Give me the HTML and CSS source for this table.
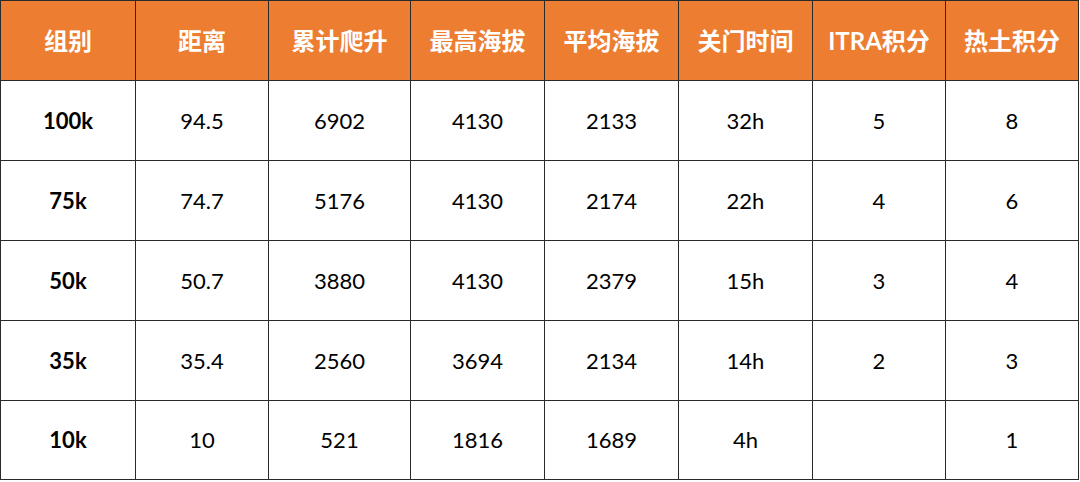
FILE: index.html
```html
<!DOCTYPE html>
<html lang="zh">
<head>
<meta charset="utf-8">
<link rel="stylesheet" href="styles.css">
</head>
<body>
<div class="table">
  <div class="cell head">组别</div>
  <div class="cell head">距离</div>
  <div class="cell head">累计爬升</div>
  <div class="cell head">最高海拔</div>
  <div class="cell head">平均海拔</div>
  <div class="cell head">关门时间</div>
  <div class="cell head">ITRA积分</div>
  <div class="cell head">热土积分</div>

  <div class="cell key">100k</div>
  <div class="cell">94.5</div>
  <div class="cell">6902</div>
  <div class="cell">4130</div>
  <div class="cell">2133</div>
  <div class="cell">32h</div>
  <div class="cell">5</div>
  <div class="cell">8</div>

  <div class="cell key">75k</div>
  <div class="cell">74.7</div>
  <div class="cell">5176</div>
  <div class="cell">4130</div>
  <div class="cell">2174</div>
  <div class="cell">22h</div>
  <div class="cell">4</div>
  <div class="cell">6</div>

  <div class="cell key">50k</div>
  <div class="cell">50.7</div>
  <div class="cell">3880</div>
  <div class="cell">4130</div>
  <div class="cell">2379</div>
  <div class="cell">15h</div>
  <div class="cell">3</div>
  <div class="cell">4</div>

  <div class="cell key">35k</div>
  <div class="cell">35.4</div>
  <div class="cell">2560</div>
  <div class="cell">3694</div>
  <div class="cell">2134</div>
  <div class="cell">14h</div>
  <div class="cell">2</div>
  <div class="cell">3</div>

  <div class="cell key">10k</div>
  <div class="cell">10</div>
  <div class="cell">521</div>
  <div class="cell">1816</div>
  <div class="cell">1689</div>
  <div class="cell">4h</div>
  <div class="cell"></div>
  <div class="cell">1</div>
</div>
</body>
</html>
```

FILE: styles.css
```css
html, body {
  margin: 0;
  padding: 0;
  background: #ffffff;
}

body {
  font-family: Lato, "Noto Sans CJK SC", sans-serif;
  color: #000000;
}

.table {
  display: grid;
  grid-template-columns: 134px 132px 141px 133px 133px 133px 132px 132px;
  grid-template-rows: repeat(5, 79px) 78px;
  gap: 1px;
  padding: 1px;
  width: max-content;
  background: #2a2a2a;
}

.cell {
  background: #ffffff;
  display: flex;
  align-items: center;
  justify-content: center;
  font-size: 22px;
  line-height: 1;
}

.head {
  background: #ed7d31;
  color: #ffffff;
  font-weight: 700;
  font-size: 24px;
}

.key {
  font-weight: 700;
}
```
